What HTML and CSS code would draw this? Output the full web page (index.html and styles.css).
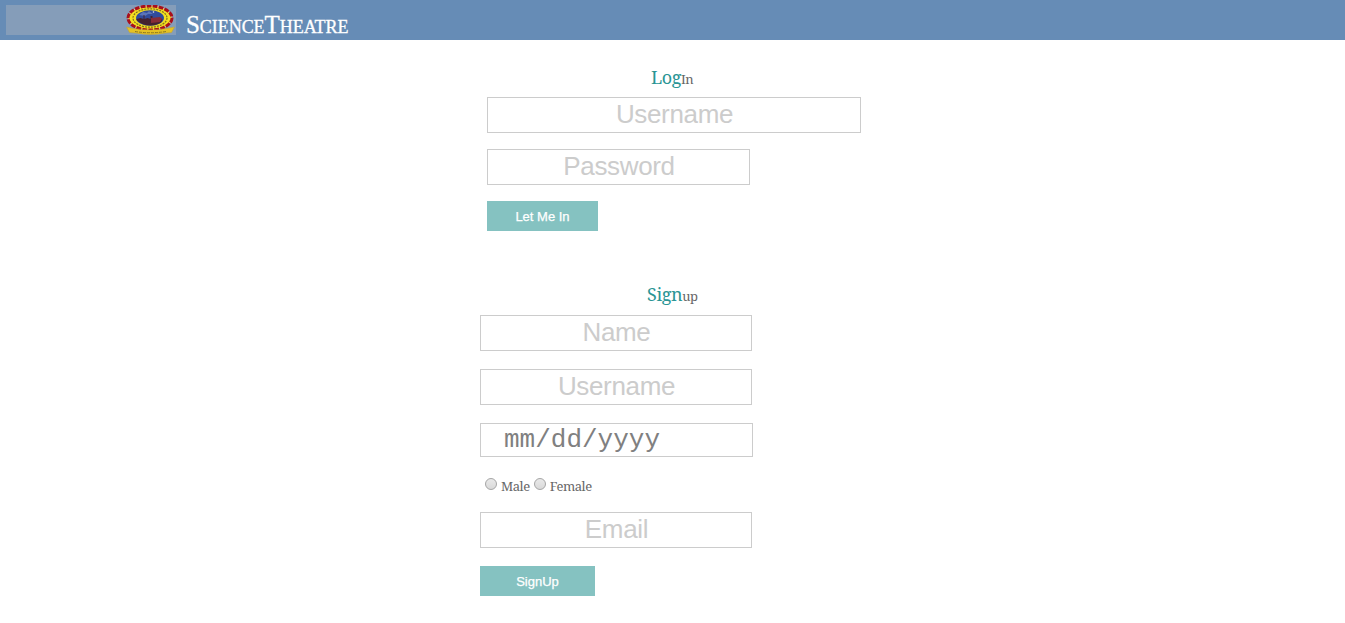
FILE: index.html
```html
<!DOCTYPE html>
<html lang="en">
<head>
<meta charset="utf-8">
<title>ScienceTheatre</title>
<link rel="stylesheet" href="styles.css">
</head>
<body>
<header class="topbar">
  <div class="brand-plate">
    <svg class="emblem" width="50" height="30" viewBox="0 0 50 30">
      <ellipse cx="24" cy="13" rx="21.8" ry="12.2" fill="#f3df20" stroke="#e0cfb4" stroke-width="1"/>
      <ellipse cx="24" cy="13" rx="22" ry="12" fill="none" stroke="#a8101c" stroke-width="3" stroke-dasharray="4.8 1.2"/>
      <ellipse cx="24" cy="13" rx="17" ry="9.200" fill="none" stroke="#81701c" stroke-width="1.200" stroke-dasharray="2 1"/>
      <ellipse cx="24" cy="13" rx="14" ry="7.7" fill="#304b9c"/>
      <path d="M13 10l4-3 4 1 2-2 4 3h-5l-3 2z" fill="#5b75b9"/>
      <path d="M10.500 14l4-1 3 1v-4h1v4l3-1 3 1v-3h2v3l5-1 5 1-1 3q-4 3.300-11 3.600-9-.3-14-5.600z" fill="#44222f"/>
      <path d="M25 13l9-1 2 2-2 3-9 1z" fill="#872c37"/>
      <circle cx="27.500" cy="7" r=".8" fill="#e8e8ef"/>
      <path d="M.5 22l7 1.500q17 3 33 0l8-1.500-3 5.500-6 .5q-15 3-30 0l-6-.5z" fill="#e5c222" stroke="#c0a030" stroke-width=".5"/>
      <path d="M9 26.500q15 2.500 31 0" fill="none" stroke="#8c7722" stroke-width="1" stroke-dasharray="3 1"/>
    </svg>
  </div>
  <h1 class="site-title">ScienceTheatre</h1>
</header>
<main class="forms">
  <form class="login">
    <h2 class="heading login-heading"><span class="accent">Log</span>In</h2>
    <input class="field field-wide" type="text" placeholder="Username">
    <input class="field field-password" type="password" placeholder="Password">
    <button class="button button-login" type="button">Let Me In</button>
  </form>
  <form class="signup">
    <h2 class="heading signup-heading"><span class="accent">Sign</span>up</h2>
    <input class="field" type="text" placeholder="Name">
    <input class="field" type="text" placeholder="Username">
    <input class="field field-date" type="text" placeholder="mm/dd/yyyy">
    <div class="gender">
      <label class="option"><input class="radio" type="radio" name="gender"><span class="male">Male</span></label>
      <label class="option"><input class="radio" type="radio" name="gender"><span class="female">Female</span></label>
    </div>
    <input class="field" type="email" placeholder="Email">
    <button class="button button-signup" type="button">SignUp</button>
  </form>
</main>
</body>
</html>
```
FILE: styles.css
```css
* { box-sizing: border-box; }
body {
  margin: 0;
  background: #fff;
  color: #666;
  font-family: "Noto Serif", "Droid Serif", "Liberation Serif", serif;
}
.topbar {
  display: flex;
  height: 40px;
  padding: 5px 6px;
  gap: 10px;
  background: #668cb6;
}
.brand-plate {
  display: flex;
  justify-content: flex-end;
  width: 170px;
  height: 30px;
  background: #859db9;
}
.emblem { display: block; }
.site-title {
  margin: 0;
  padding-top: 5px;
  color: #fff;
  font: 400 25px/30px Georgia, "Liberation Serif", serif;
  font-variant: small-caps;
  letter-spacing: -.05px;
  -webkit-text-stroke: .3px #fff;
}
.forms { width: 385px; margin-left: 480px; }
.login {
  display: flex;
  flex-direction: column;
  align-items: flex-start;
  gap: 16px;
  padding: 26px 0 0 7px;
}
.signup {
  display: flex;
  flex-direction: column;
  align-items: flex-start;
  gap: 18px;
  padding-top: 52px;
}
.heading {
  width: 50px;
  height: 24px;
  margin: 0;
  font-size: 13px;
  line-height: 22px;
  font-weight: 400;
  letter-spacing: -.5px;
  white-space: nowrap;
}
.login-heading { margin: 0 0 -9px 164px; }
.signup-heading { margin: 0 0 -10px 167px; }
.accent { color: #2a9595; font-size: 18px; letter-spacing: -.4px; }
.field {
  width: 272px;
  height: 36px;
  margin: 0;
  padding: 0 4px 2px 5px;
  border: 1px solid #ccc;
  border-radius: 0;
  background: #fff;
  font: 26px "Liberation Sans", Arial, sans-serif;
  letter-spacing: -.35px;
  text-align: center;
}
.field::placeholder { color: #ccc; opacity: 1; }
.field-wide { width: 374px; }
.field-password { width: 263px; }
.field-date {
  width: 273px;
  height: 34px;
  padding: 0 0 0 23px;
  font-family: "Liberation Mono", "Courier New", monospace;
  letter-spacing: 0;
  text-align: left;
}
.field-date::placeholder { color: #808080; }
.button {
  height: 30px;
  padding: 1px 0 0;
  border: 0;
  border-radius: 0;
  background: #85c2c1;
  color: #fff;
  font: 13px/29px "Liberation Sans", Arial, sans-serif;
}
.button-login { width: 111px; -webkit-text-stroke: .25px #fff; }
.button-signup { width: 115px; -webkit-text-stroke: .25px #fff; }
.gender {
  display: flex;
  height: 19px;
  padding-left: 5px;
  gap: 4px;
  font-size: 13px;
  line-height: 23px;
  letter-spacing: -.45px;
}
.option { display: flex; gap: 4px; }
.radio {
  appearance: none;
  width: 12px;
  height: 12px;
  margin: 3px 0 0;
  border: 1px solid #a5a5a5;
  border-radius: 50%;
  background: linear-gradient(#e9e9e9, #d9d9d9);
}
```
